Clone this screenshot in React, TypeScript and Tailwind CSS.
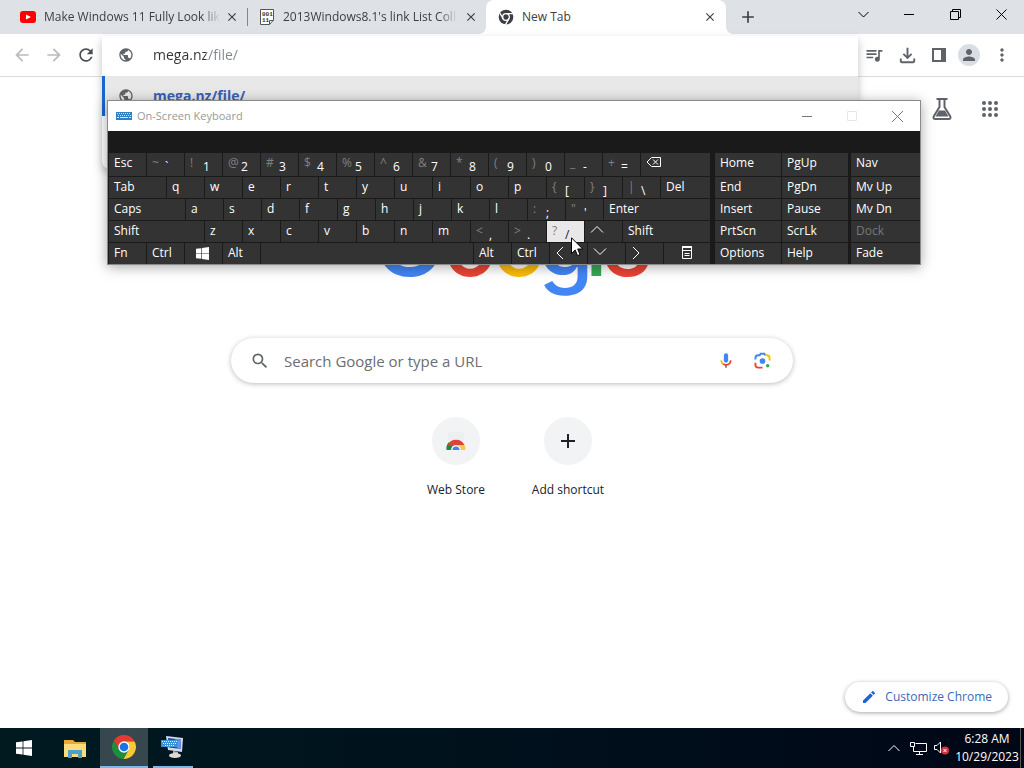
import React from "react";
import {
  MdArrowBack,
  MdArrowForward,
  MdRefresh,
  MdPublic,
  MdQueueMusic,
  MdOutlineFileDownload,
  MdPerson,
  MdMoreVert,
  MdSearch,
  MdEdit,
  MdClose,
  MdAdd,
} from "react-icons/md";

type KeyProps = {
  label?: React.ReactNode;
  name?: string;
  shift?: string;
  width?: string;
  active?: boolean;
  disabled?: boolean;
};

const Key: React.FC<KeyProps> = ({
  label,
  name,
  shift,
  width = "w-[37px]",
  active,
  disabled,
}) => {
  let colors = "bg-[#333] text-white";
  if (active) colors = "bg-[#e8e8e8] text-[#222]";
  if (disabled) colors = "bg-[#333] text-[#777]";

  return (
    <button
      aria-label={name}
      disabled={disabled}
      className={`flex h-full items-start overflow-hidden pt-px pl-[5px] text-xs leading-[18px] ${width} ${colors}`}
    >
      {shift ? (
        <>
          <span className="w-[13px] text-left text-[#808080]">{shift}</span>
          <span className="pt-1">{label}</span>
        </>
      ) : (
        label
      )}
    </button>
  );
};

const Chevron: React.FC<{ d: string }> = ({ d }) => (
  <svg width="14" height="16" viewBox="0 0 14 16" fill="none" stroke="currentColor">
    <path d={d} />
  </svg>
);

const WindowsLogo: React.FC<{ size: number }> = ({ size }) => (
  <svg width={size} height={size} viewBox="0 0 16 16" fill="currentColor">
    <path d="M0 2.3 6.6 1.4V7.6H0zM7.4 1.3 16 0V7.6H7.4zM0 8.4H6.6V14.6L0 13.7zM7.4 8.4H16V16L7.4 14.7z" />
  </svg>
);

const ChromeLogo: React.FC = () => (
  <svg width="26" height="26" viewBox="0 0 48 48">
    <path
      fill="#e33b2e"
      d="M5.5 12A22 22 0 0 1 43.6 14H24A10 10 0 0 0 15.3 29Z"
    />
    <path
      fill="#fcc934"
      d="M24 14H43.6A22 22 0 0 1 22.9 46L32.7 29A10 10 0 0 0 24 14Z"
    />
    <path
      fill="#1e8e3e"
      d="M32.7 29L22.9 46A22 22 0 0 1 5.5 12L15.3 29A10 10 0 0 0 32.7 29Z"
    />
    <circle cx="24" cy="24" r="10.5" fill="#fff" />
    <circle cx="24" cy="24" r="8" fill="#1a73e8" />
  </svg>
);

const ChromeMono: React.FC = () => (
  <svg width="16" height="16" viewBox="0 0 48 48">
    <circle cx="24" cy="24" r="22" fill="#3c4043" />
    <g stroke="#fff" strokeWidth="4" fill="none">
      <circle cx="24" cy="24" r="10" />
      <path d="M24 14H45M32.7 29L22 47.5M15.3 29L4.5 10.5" />
    </g>
  </svg>
);

const keys = (list: string) => list.split("").map((k) => ({ label: k }));
const pairs = (list: string[]) =>
  list.map((p) => ({ shift: p[0], label: p[1] }));

const mainRows: KeyProps[][] = [
  [
    { label: "Esc" },
    ...pairs(["~`", "!1", "@2", "#3", "$4", "%5", "^6", "&7", "*8", "(9", ")0", "_-", "+="]),
    {
      name: "Backspace",
      width: "flex-1",
      label: (
        <svg width="16" height="18" viewBox="0 0 16 18" fill="none" stroke="currentColor">
          <path d="M5.500 3.500H14.500V12.500H5.500L1 8zM7 5.500L12 10.500M12 5.500L7 10.500" />
        </svg>
      ),
    },
  ],
  [
    { label: "Tab", width: "w-[57px]" },
    ...keys("qwertyuiop"),
    ...pairs(["{[", "}]", "|\\"]),
    { label: "Del", width: "flex-1" },
  ],
  [
    { label: "Caps", width: "w-[76px]" },
    ...keys("asdfghjkl"),
    ...pairs([":;", "\"'"]),
    { label: "Enter", width: "flex-1" },
  ],
  [
    { label: "Shift", width: "w-[95px]" },
    ...keys("zxcvbnm"),
    ...pairs(["<,", ">."]),
    { shift: "?", label: "/", active: true },
    { name: "Up", label: <Chevron d="M1 10.500L7 4.500L13 10.500" /> },
    { label: "Shift", width: "flex-1" },
  ],
  [
    { label: "Fn" },
    { label: "Ctrl" },
    {
      name: "Windows",
      label: (
        <span className="pt-[3px] pl-1.5">
          <WindowsLogo size={13} />
        </span>
      ),
    },
    { label: "Alt" },
    { name: "Space", width: "flex-1" },
    { label: "Alt" },
    { label: "Ctrl" },
    { name: "Left", label: <Chevron d="M8 3L2 9L8 15" /> },
    { name: "Down", label: <Chevron d="M1 4.500L7 10.500L13 4.500" /> },
    { name: "Right", label: <Chevron d="M2 3L8 9L2 15" /> },
    {
      name: "Menu",
      width: "w-[46px]",
      label: (
        <svg
          className="ml-3"
          width="12"
          height="17"
          viewBox="0 0 12 17"
          fill="none"
          stroke="currentColor"
        >
          <path d="M1.500 3.500H10.500V14.500H1.500zM1.500 6.500H10.500M3.500 9.500H8.500M3.500 11.500H8.500" />
          <path d="M1 3H11" strokeWidth="2" />
        </svg>
      ),
    },
  ],
];

const navRows = [
  ["Home", "PgUp", "Nav"],
  ["End", "PgDn", "Mv Up"],
  ["Insert", "Pause", "Mv Dn"],
  ["PrtScn", "ScrLk", "Dock"],
  ["Options", "Help", "Fade"],
];

const Keyboard: React.FC = () => (
  <section className="absolute left-[107px] top-[100px] w-[814px] border border-[#8a8a8a] bg-[#1a1a1a] shadow-[0_2px_12px_rgba(0,0,0,0.35)]">
    <header className="flex h-[30px] items-center bg-white pl-2 text-[#999]">
      <svg width="16" height="10" viewBox="0 0 16 10">
        <rect y="1" width="16" height="8" fill="#2f7fc4" />
        <path
          d="M1 2.500H15M2 4.500H15"
          stroke="#d5e8f7"
          strokeDasharray="1 1"
        />
        <path d="M1 6.500H3M4 6.500H12M13 6.500H15" stroke="#d5e8f7" />
      </svg>
      <h2 className="flex-1 pl-[5px] text-[11px]">On-Screen Keyboard</h2>
      <button aria-label="Minimize" className="flex w-[45px] justify-center">
        <svg width="11" height="11" stroke="#777">
          <path d="M0 5.500H10" />
        </svg>
      </button>
      <button aria-label="Maximize" disabled className="flex w-[45px] justify-center">
        <svg width="11" height="11" stroke="#e8e8e8" fill="none">
          <path d="M.5 .5H9.500V9.500H.5z" />
        </svg>
      </button>
      <button aria-label="Close" className="flex w-[45px] justify-center">
        <svg width="11" height="11" stroke="#777">
          <path d="M0 0L11 11M11 0L0 11" />
        </svg>
      </button>
    </header>
    <div className="flex gap-[5px] pt-[22px] pl-px">
      <div className="flex flex-1 flex-col gap-px">
        {mainRows.map((row, i) => (
          <div key={i} className={`flex gap-px ${i ? "h-[21px]" : "h-[23px]"}`}>
            {row.map((k, j) => (
              <Key key={j} {...k} />
            ))}
          </div>
        ))}
      </div>
      <div className="flex flex-col gap-px">
        {navRows.map((row, i) => (
          <div key={i} className={`flex gap-px ${i ? "h-[21px]" : "h-[23px]"}`}>
            <Key label={row[0]} width="w-[66px]" />
            <Key label={row[1]} width="w-[66px]" />
            <span className="w-px" />
            <Key label={row[2]} width="w-[69px]" disabled={row[2] === "Dock"} />
          </div>
        ))}
      </div>
    </div>
  </section>
);

const TabStrip: React.FC = () => (
  <div className="flex h-[34px] items-stretch bg-[#dee1e6] text-xs text-[#3c4043]">
    <div className="flex w-[247px] items-center pl-5">
      <svg width="16" height="12" viewBox="0 0 16 12">
        <rect width="16" height="12" rx="3" fill="#f00" />
        <path d="M6 3.500L11 6L6 8.500z" fill="#fff" />
      </svg>
      <span className="ml-2 w-[176px] overflow-hidden whitespace-nowrap mask-r-from-90%">
        Make Windows 11 Fully Look like
      </span>
      <button aria-label="Close tab" className="ml-[5px]">
        <MdClose size={14} />
      </button>
    </div>
    <div className="my-2 w-px bg-[#80868b]" />
    <div className="flex w-[238px] items-center pl-[11px]">
      <svg width="16" height="16" viewBox="0 0 16 16" fill="none" stroke="#555">
        <path
          d="M1.500 .5H14.500V11L10.500 15.500H1.500zM10.500 15.500V11.500H14.500"
          fill="#fff"
        />
        <g fill="#333" stroke="none" fontFamily="Liberation Mono" fontWeight="bold" fontSize="6">
          <text x="3" y="7">001</text>
          <text x="3" y="13">11</text>
        </g>
      </svg>
      <span className="ml-2 w-[174px] overflow-hidden whitespace-nowrap mask-r-from-90%">
        2013Windows8.1's link List Collection
      </span>
      <button aria-label="Close tab" className="ml-[7px]">
        <MdClose size={14} />
      </button>
    </div>
    <div className="relative flex w-[240px] items-center rounded-t-lg bg-white pl-3 before:absolute before:bottom-0 before:-left-2 before:size-2 before:bg-[radial-gradient(circle_at_0_0,transparent_8px,white_8px)] after:absolute after:-right-2 after:bottom-0 after:size-2 after:bg-[radial-gradient(circle_at_100%_0,transparent_8px,white_8px)]">
      <ChromeMono />
      <span className="ml-2 flex-1">New Tab</span>
      <button aria-label="Close tab" className="mr-[9px]">
        <MdClose size={14} />
      </button>
    </div>
    <button aria-label="New tab" className="ml-3">
      <MdAdd size={20} />
    </button>
    <div className="ml-auto flex h-7 items-center text-black">
      <button aria-label="Search tabs" className="flex w-[46px] justify-center">
        <svg width="11" height="11" fill="none" stroke="currentColor">
          <path d="M.5 3L5.500 8L10.500 3" />
        </svg>
      </button>
      <button aria-label="Minimize" className="flex w-[46px] justify-center">
        <svg width="11" height="11" fill="none" stroke="currentColor">
          <path d="M0 5.500H10" />
        </svg>
      </button>
      <button aria-label="Restore" className="flex w-[46px] justify-center">
        <svg width="11" height="11" fill="none" stroke="currentColor">
          <path d="M.5 2.500H8.500V10.500H.5zM2.500 2.500V.5H10.500V8.500H8.500" />
        </svg>
      </button>
      <button aria-label="Close" className="flex w-[46px] justify-center">
        <svg width="11" height="11" fill="none" stroke="currentColor">
          <path d="M.5 .5L10.500 10.500M10.500 .5L.5 10.500" />
        </svg>
      </button>
    </div>
  </div>
);

const Toolbar: React.FC = () => (
  <div className="flex h-[43px] items-center border-b border-[#dcdcdc] bg-white text-[#5f6368]">
    <div className="flex w-[102px] items-center gap-3 pl-3">
      <button aria-label="Back" className="text-[#b8babd]">
        <MdArrowBack size={20} />
      </button>
      <button aria-label="Forward" className="text-[#b8babd]">
        <MdArrowForward size={20} />
      </button>
      <button aria-label="Reload" className="text-[#4a4d50]">
        <MdRefresh size={20} />
      </button>
    </div>
    <div className="relative h-10 flex-1 self-end">
      <div className="absolute inset-x-0 top-0 h-[133px] rounded-b-lg bg-white shadow-[0_4px_8px_rgba(0,0,0,0.25)]">
        <label className="flex h-10 items-center pb-0.5 pl-4">
          <MdPublic size={16} />
          <input
            aria-label="Address"
            defaultValue="mega.nz/file/"
            className="ml-[19px] flex-1 bg-linear-to-r from-[#333] from-[53px] to-[#80868b] to-[53px] bg-clip-text text-sm text-transparent outline-none"
          />
        </label>
        <a
          href="#"
          className="flex h-10 items-center border-l-[3px] border-[#1a66d0] bg-[#e8e8e8] pl-[13px] text-sm font-bold text-[#3b5fb5]"
        >
          <MdPublic size={16} className="text-[#5f6368]" />
          <span className="ml-[19px]">mega.nz/file/</span>
        </a>
      </div>
    </div>
    <div className="flex w-[166px] items-center justify-between pr-3 pl-1.5">
      <button aria-label="Media controls">
        <MdQueueMusic size={20} />
      </button>
      <button aria-label="Downloads">
        <MdOutlineFileDownload size={23} />
      </button>
      <button aria-label="Side panel">
        <svg width="14" height="14" viewBox="0 0 14 14">
          <path fill="#5f6368" d="M0 0H14V14H0zM2 2V12H9V2z" fillRule="evenodd" />
        </svg>
      </button>
      <button
        aria-label="Profile"
        className="flex size-[22px] items-center justify-center rounded-full bg-[#dadde4]"
      >
        <MdPerson size={18} />
      </button>
      <button aria-label="Menu">
        <MdMoreVert size={20} />
      </button>
    </div>
  </div>
);

const GoogleLogo: React.FC = () => (
  <svg
    width="272"
    height="94"
    viewBox="0 0 272 94"
    fontFamily="Inter, Liberation Sans, sans-serif"
    fontSize="90"
    fontWeight="500"
  >
    <text y="70">
      <tspan x="-4" fontSize="98" fill="#4285f4">G</tspan>
      <tspan x="67" fill="#ea4335">o</tspan>
      <tspan x="116" fill="#fbbc05">o</tspan>
      <tspan x="162" fill="#4285f4">g</tspan>
      <tspan x="209" fill="#34a853">l</tspan>
      <tspan x="224" fill="#ea4335">e</tspan>
    </text>
  </svg>
);

const NewTabPage: React.FC = () => (
  <main className="flex flex-1 flex-col items-center bg-white">
    <div className="flex h-16 w-full items-center justify-end gap-7 pr-6">
      <button aria-label="Search labs">
        <svg width="20" height="22" viewBox="0 0 20 22" fill="none" stroke="#5f6368" strokeWidth="2">
          <path d="M4.500 1H15.500M7.500 1V9L1.700 18.500Q.8 21 3.500 21H16.500Q19.200 21 18.300 18.500L12.500 9V1" />
          <path d="M7 12.500H13L16.500 18.500H3.500z" fill="#5f6368" stroke="none" />
        </svg>
      </button>
      <button aria-label="Google apps">
        <svg width="20" height="20" viewBox="0 0 20 20" fill="#5f6368">
          {[4, 10, 16].map((y) =>
            [4, 10, 16].map((x) => <circle key={`${x}-${y}`} cx={x} cy={y} r="2" />)
          )}
        </svg>
      </button>
    </div>
    <div className="pt-[65px]">
      <GoogleLogo />
    </div>
    <label className="mt-[38px] flex h-[45px] w-[562px] max-w-full items-center rounded-full bg-white pr-[22px] pl-[19px] shadow-[0_1px_5px_rgba(32,33,36,0.3)]">
      <MdSearch size={20} className="text-[#5f6368]" />
      <input
        placeholder="Search Google or type a URL"
        aria-label="Search"
        className="ml-[14px] flex-1 pt-0.5 text-[15px] text-[#333] outline-none placeholder:text-[#6b6e72]"
      />
      <svg width="12" height="18" viewBox="0 0 14 20" fill="none" strokeWidth="2">
        <rect x="4.500" y="1" width="5" height="11" rx="2.500" fill="#4285f4" />
        <path d="M1.500 9Q1.500 12 3.500 13.500" stroke="#fbbc05" />
        <path d="M3.500 13.500Q7 15.500 10.500 13.500Q12.500 12 12.500 9" stroke="#ea4335" />
        <path d="M7 14.500V18" stroke="#a0665a" />
      </svg>
      <svg className="ml-[22px]" width="17" height="17" viewBox="0 0 18 18" fill="none" strokeWidth="2">
        <path d="M1.500 8V6.500Q1.500 3.500 4.500 3.500H6L7 1.800H11L12 3.500" stroke="#4285f4" />
        <path d="M12 3.500H13.500Q16.500 3.500 16.500 6.500V9" stroke="#fbbc05" />
        <path d="M1.500 11.500V13.500Q1.500 16.500 4.500 16.500H9" stroke="#ea4335" />
        <circle cx="9" cy="9.500" r="3" fill="#4285f4" />
        <circle cx="14.500" cy="14.500" r="1.800" fill="#34a853" />
      </svg>
    </label>
    <nav className="mt-[34px] flex text-xs text-[#202124]">
      <a href="#" className="flex w-28 flex-col items-center gap-[17px]">
        <span className="flex size-12 items-center justify-center rounded-full bg-[#f1f3f4]">
          <svg width="24" height="24" viewBox="0 0 24 24">
            <path d="M4 3H20V12H4z" fill="#eceeef" />
            <path d="M2.500 21A9.500 9.500 0 0 1 5 13L9 18V21z" fill="#1e8e3e" />
            <path d="M3.600 16A9.500 9.500 0 0 1 20.500 16L12 18z" fill="#db4437" />
            <path d="M14 16H20.500A9.500 9.500 0 0 1 21.500 21H15z" fill="#fcc934" />
            <path d="M7 21A5 5 0 0 1 17 21z" fill="#f1f3f4" />
            <path d="M8.500 21A3.500 3.500 0 0 1 15.500 21z" fill="#4285f4" />
          </svg>
        </span>
        Web Store
      </a>
      <button className="flex w-28 flex-col items-center gap-[17px]">
        <span className="flex size-12 items-center justify-center rounded-full bg-[#f1f3f4]">
          <MdAdd size={24} />
        </span>
        Add shortcut
      </button>
    </nav>
    <div className="mt-auto flex w-full justify-end pr-4 pb-4">
      <button className="flex h-[30px] items-center gap-2 rounded-full bg-white px-4 text-xs text-[#3b68b5] shadow-[0_1px_4px_rgba(0,0,0,0.35)]">
        <MdEdit size={16} className="text-[#1a66d8]" />
        Customize Chrome
      </button>
    </div>
  </main>
);

const Taskbar: React.FC = () => (
  <footer className="flex h-10 items-stretch bg-linear-to-r from-[#001a20] to-[#000717] text-white">
    <button aria-label="Start" className="flex w-12 items-center justify-center">
      <WindowsLogo size={16} />
    </button>
    <button aria-label="File Explorer" className="ml-0.5 flex w-[50px] items-center justify-center">
      <svg width="22" height="19" viewBox="0 0 22 19">
        <path d="M0 1H9L11 3H22V18H0z" fill="#e9a93a" />
        <path d="M0 5H22V18H0z" fill="#fbdc7c" />
        <path d="M4 19V11H18V19H14V15H8V19z" fill="#4da0cc" />
      </svg>
    </button>
    <button
      aria-label="Google Chrome"
      className="flex w-12 items-center justify-center border-b-2 border-[#76b9ed] bg-[#36474e]"
    >
      <ChromeLogo />
    </button>
    <button
      aria-label="On-Screen Keyboard"
      className="ml-[5px] flex w-10 items-center justify-center border-b-2 border-[#76b9ed]"
    >
      <svg width="24" height="24" viewBox="0 0 24 24">
        <path d="M5 1L22 3L21 17L7 15z" fill="#d4dae6" />
        <path d="M7 3L20 4.500L19.500 14L8 12.500z" fill="#2142b8" />
        <path d="M14 4L20 4.500L19.500 14L16 13.500z" fill="#6d91e6" />
        <path d="M12 16L17 17V20H12z" fill="#b9b9b9" />
        <ellipse cx="14" cy="20.500" rx="6" ry="2.500" fill="#dedad2" />
        <rect x="0" y="5" width="17" height="7" fill="#3a93d6" />
        <path d="M1 6.500H16M2 8.500H16M4 10.500H13" stroke="#e3f2ff" strokeDasharray="1 1" />
      </svg>
    </button>
    <div className="ml-auto flex items-center">
      <button aria-label="Show hidden icons">
        <svg width="12" height="8" fill="none" stroke="#fff">
          <path d="M.5 7L6 1.500L11.500 7" />
        </svg>
      </button>
      <svg className="ml-2.5" width="17" height="15" viewBox="0 0 17 15" fill="none" stroke="#fff">
        <path d="M5.500 2.500H16.500V10.500H3.500V6M6 13.500H13M9.500 10.500V13.500M.5 1.500H4.500V5.500H.5z" />
      </svg>
      <svg className="ml-1.5" width="18" height="16" viewBox="0 0 18 16" fill="none" stroke="#fff">
        <path d="M1.500 5.500H4L7.500 2V13L4 9.500H1.500z" />
        <circle cx="12" cy="10.500" r="4" fill="#d13438" stroke="none" />
        <path d="M10.500 9L13.500 12M13.500 9L10.500 12" />
      </svg>
      <div className="ml-1 w-16 text-center text-xs leading-[18px] whitespace-nowrap">
        <div>6:28 AM</div>
        <div>10/29/2023</div>
      </div>
      <button aria-label="Show desktop" className="ml-px h-10 w-1 border-l border-[#555]" />
    </div>
  </footer>
);

const Cursor: React.FC = () => (
  <svg
    className="pointer-events-none absolute left-[571px] top-[237px]"
    width="13"
    height="20"
    viewBox="0 0 13 20"
  >
    <path
      d="M.5 .8V16.500L4.200 13L6.500 18.700L9 17.600L6.700 12H11.700z"
      fill="#fff"
      stroke="#000"
    />
  </svg>
);

const App: React.FC = () => {
  return (
    <div className="relative flex min-h-screen flex-col bg-white font-['Open_Sans','Noto_Sans',sans-serif]">
      <TabStrip />
      <Toolbar />
      <NewTabPage />
      <Taskbar />
      <Keyboard />
      <Cursor />
    </div>
  );
};

export default App;
